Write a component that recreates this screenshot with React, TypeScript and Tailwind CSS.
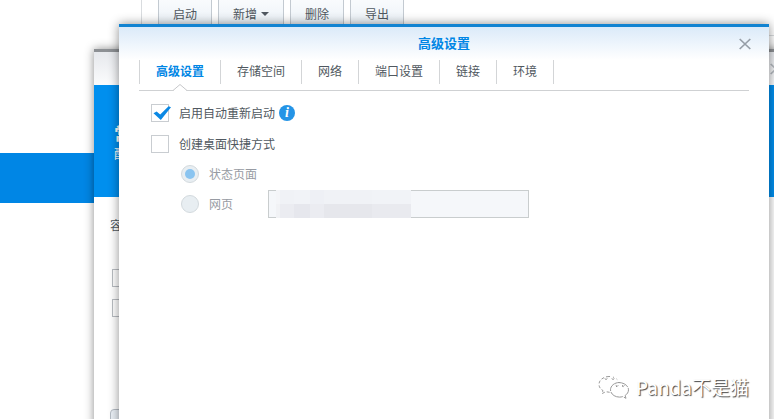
import React, { useState } from "react";

const toolbar = [
  { label: "启动" },
  { label: "新增", menu: true },
  { label: "删除" },
  { label: "导出" },
];

const tabs = ["高级设置", "存储空间", "网络", "端口设置", "链接", "环境"];

function Toolbar() {
  return (
    <div className="ml-[141px] flex h-9 gap-1.5 border-b border-l border-[#d9dcdf] pl-4">
      {toolbar.map((item) => (
        <button
          key={item.label}
          type="button"
          className="flex h-7 items-center gap-1 rounded-b-sm border border-t-0 border-[#c3cad1] bg-linear-to-b from-[#f9fbfd] to-[#eaf1f7] px-3.5 text-[#505860]"
        >
          {item.label}
          {item.menu && (
            <span className="h-0 w-0 border-x-4 border-t-4 border-x-transparent border-t-[#505860]" />
          )}
        </button>
      ))}
    </div>
  );
}

function WizardWindow() {
  return (
    <section className="absolute top-[49px] -right-2 -bottom-5 left-[94px] border-t-3 border-[#8d9094] bg-white shadow-[0_0_9px_rgba(0,0,0,0.45)]">
      <div className="flex h-[33px] items-center justify-end bg-linear-to-b from-[#e6e8ec] to-[#fbfcfd]">
        <button type="button" aria-label="关闭向导" className="size-3">
          <svg className="size-3" viewBox="0 0 12 12" stroke="#b4b9bf" strokeWidth="1.7" aria-hidden="true">
            <path d="M.7 1 11.3 11M11.3 1 .7 11" />
          </svg>
        </button>
      </div>
      <header className="h-28 bg-[#008fee] px-5 pt-[35px] text-white">
        <h2 className="text-lg leading-[26px] font-bold">常规设置</h2>
        <p className="leading-4">配置容器</p>
      </header>
      <div className="px-4 pt-5 text-[#505860]">
        <p className="leading-4">容器名称</p>
        <div className="flex flex-col gap-3 pt-9 pl-0.5">
          <input type="checkbox" aria-label="资源限制" className="size-[18px] appearance-none border border-[#b9bdc2] bg-white" />
          <input type="checkbox" aria-label="自动启动" className="size-[18px] appearance-none border border-[#b9bdc2] bg-white" />
        </div>
        <button
          type="button"
          aria-label="上一步"
          className="mt-[92px] h-7 w-20 rounded-sm border border-[#b5bcc4] bg-[#eaf0f6]"
        />
      </div>
    </section>
  );
}

function TabBar() {
  return (
    <nav className="mx-5 flex h-[31px] border-b border-[#cfd1d3]">
      <div className="flex h-6 border-l border-[#d3d5d7]">
        {tabs.map((tab, i) => (
          <button
            key={tab}
            type="button"
            className={
              i === 0
                ? "relative border-r border-[#d3d5d7] px-4 pb-0.5 font-bold text-[#0086e5]"
                : "border-r border-[#d3d5d7] px-4 pb-0.5 text-[#505860]"
            }
          >
            {tab}
            {i === 0 && (
              <svg className="absolute top-6 left-8 h-[7px] w-4" viewBox="0 0 16 7" aria-hidden="true">
                <path d="M1 7 L8 .5 L15 7Z" fill="#fff" />
                <path d="M1 6.5 L8 .5 L15 6.5" fill="none" stroke="#c6c8ca" />
              </svg>
            )}
          </button>
        ))}
      </div>
    </nav>
  );
}

function Check({ checked, onChange, label }: { checked: boolean; onChange: () => void; label: string }) {
  return (
    <label className="flex items-center gap-2.5">
      <span className="relative size-[18px]">
        <input
          type="checkbox"
          checked={checked}
          onChange={onChange}
          className="block size-[18px] appearance-none border border-[#c9cdd1] bg-white"
        />
        {checked && (
          <svg className="absolute top-0 left-0.5 h-[18px] w-[19px]" viewBox="0 0 19 18" aria-hidden="true">
            <path d="M.5 9.2 L3.6 7.4 L7.2 10.6 L15.6 2.2 L18 3.2 L7.8 16Z" fill="#0a88e4" />
          </svg>
        )}
      </span>
      {label}
    </label>
  );
}

function Radio({ checked, label }: { checked?: boolean; label: string }) {
  return (
    <label className="flex w-[87px] items-center gap-2.5 text-[#979ba3]">
      <span className="relative size-[18px]">
        <input
          type="radio"
          name="shortcut"
          disabled
          defaultChecked={checked}
          className="block size-[18px] appearance-none rounded-full border border-[#d3dade] bg-[#e8eef2]"
        />
        {checked && <span className="absolute inset-1 rounded-full bg-[#8ac4f0]" />}
      </span>
      {label}
    </label>
  );
}

function Watermark() {
  return (
    <div className="absolute right-5 bottom-8 flex items-center gap-1.5 whitespace-nowrap">
      <svg className="h-6 w-8 shrink-0" viewBox="0 0 32 24" fill="none" stroke="#9a9a9a" strokeWidth="1" aria-hidden="true">
        <path d="M11 1.5C5.5 1.5 1 5 1 9.4c0 2.6 1.5 4.8 4 6.2l-1 3 3.8-1.9 4 .6" strokeDasharray="3 2" />
        <path d="M11 1.5c5 0 9 2.5 10 6" strokeDasharray="1 3" />
        <path d="M21.5 7.5c-5 0-9 3.3-9 7.3s4 7.3 9 7.3c1.1 0 2.2-.2 3.2-.5l3.3 1.7-.9-2.8c2.1-1.4 3.4-3.3 3.4-5.7 0-4-4.5-7.3-10-7.3Z" strokeDasharray="14 1" />
        <path d="M7 3.500l1 1 1-1M14 3.500l1 1 1-1M17.800 10.500l1.200 1 1-1M24 10.500l1.200 1 1-1" stroke="#666" />
      </svg>
      <span className="text-[19px] leading-7 text-white [text-shadow:1px_1px_1px_#444]">Panda不是猫</span>
    </div>
  );
}

function SettingsWindow() {
  const [restart, setRestart] = useState(true);
  const [shortcut, setShortcut] = useState(false);
  return (
    <section
      role="dialog"
      aria-labelledby="settings-title"
      className="absolute top-6 right-[5px] -bottom-3.5 left-[119px] border-t-3 border-[#1283d1] bg-white text-[#505860] shadow-[0_0_10px_rgba(0,0,0,0.45)]"
    >
      <header className="flex h-[33px] items-center bg-linear-to-b from-[#dbeaf9] to-white pr-[18px] pl-[30px]">
        <h1 id="settings-title" className="flex-1 pb-0.5 text-center text-[13px] leading-5 font-bold text-[#0086e5]">
          高级设置
        </h1>
        <button type="button" aria-label="关闭" className="size-3">
          <svg className="size-3" viewBox="0 0 12 12" stroke="#969ea7" strokeWidth="1.7" aria-hidden="true">
            <path d="M.7 1 11.3 11M11.3 1 .7 11" />
          </svg>
        </button>
      </header>
      <TabBar />
      <form className="px-8 pt-1.5">
        <div className="flex h-8 items-center gap-1">
          <Check checked={restart} onChange={() => setRestart(!restart)} label="启用自动重新启动" />
          <button
            type="button"
            aria-label="说明"
            className="size-4 rounded-full bg-[#2494e6] text-center font-['Liberation_Serif',serif] text-sm leading-4 font-bold text-white italic"
          >
            i
          </button>
        </div>
        <div className="flex h-[30px] items-center">
          <Check checked={shortcut} onChange={() => setShortcut(!shortcut)} label="创建桌面快捷方式" />
        </div>
        <div className="flex h-[30px] items-center pl-[30px]">
          <Radio checked label="状态页面" />
        </div>
        <div className="flex h-[30px] items-center pl-[30px]">
          <Radio label="网页" />
          <div className="relative">
            <input
              type="text"
              disabled
              aria-label="网页"
              className="block h-7 w-[261px] border border-[#c9cdce] bg-[#f5f7fa]"
            />
            {/* Pixelated patch that hides the address */}
            <div className="absolute top-0 left-2 grid h-7 w-[135px] grid-cols-[4px_14px_16px_14px_48px_39px] grid-rows-[14px_14px]">
              <span className="bg-[#f4f5f8]" />
              <span className="bg-[#f0f2f6]" />
              <span className="bg-[#f1f3f7]" />
              <span className="bg-[#eef0f5]" />
              <span className="bg-[#f0f2f6]" />
              <span className="bg-[#f1f3f7]" />
              <span className="bg-[#f1f2f5]" />
              <span className="bg-[#ebecf1]" />
              <span className="bg-[#e6e7ed]" />
              <span className="bg-[#ebecf1]" />
              <span className="bg-[#e6e7ec]" />
              <span className="bg-[#e9eaef]" />
            </div>
          </div>
        </div>
      </form>
      <Watermark />
    </section>
  );
}

export default function App() {
  return (
    <main className="relative min-h-screen overflow-hidden bg-white font-['Noto_Sans_CJK_SC',sans-serif] text-xs">
      <Toolbar />
      <div className="mt-[117px] h-[50px] bg-[#0086e5]" />
      <WizardWindow />
      <SettingsWindow />
    </main>
  );
}
